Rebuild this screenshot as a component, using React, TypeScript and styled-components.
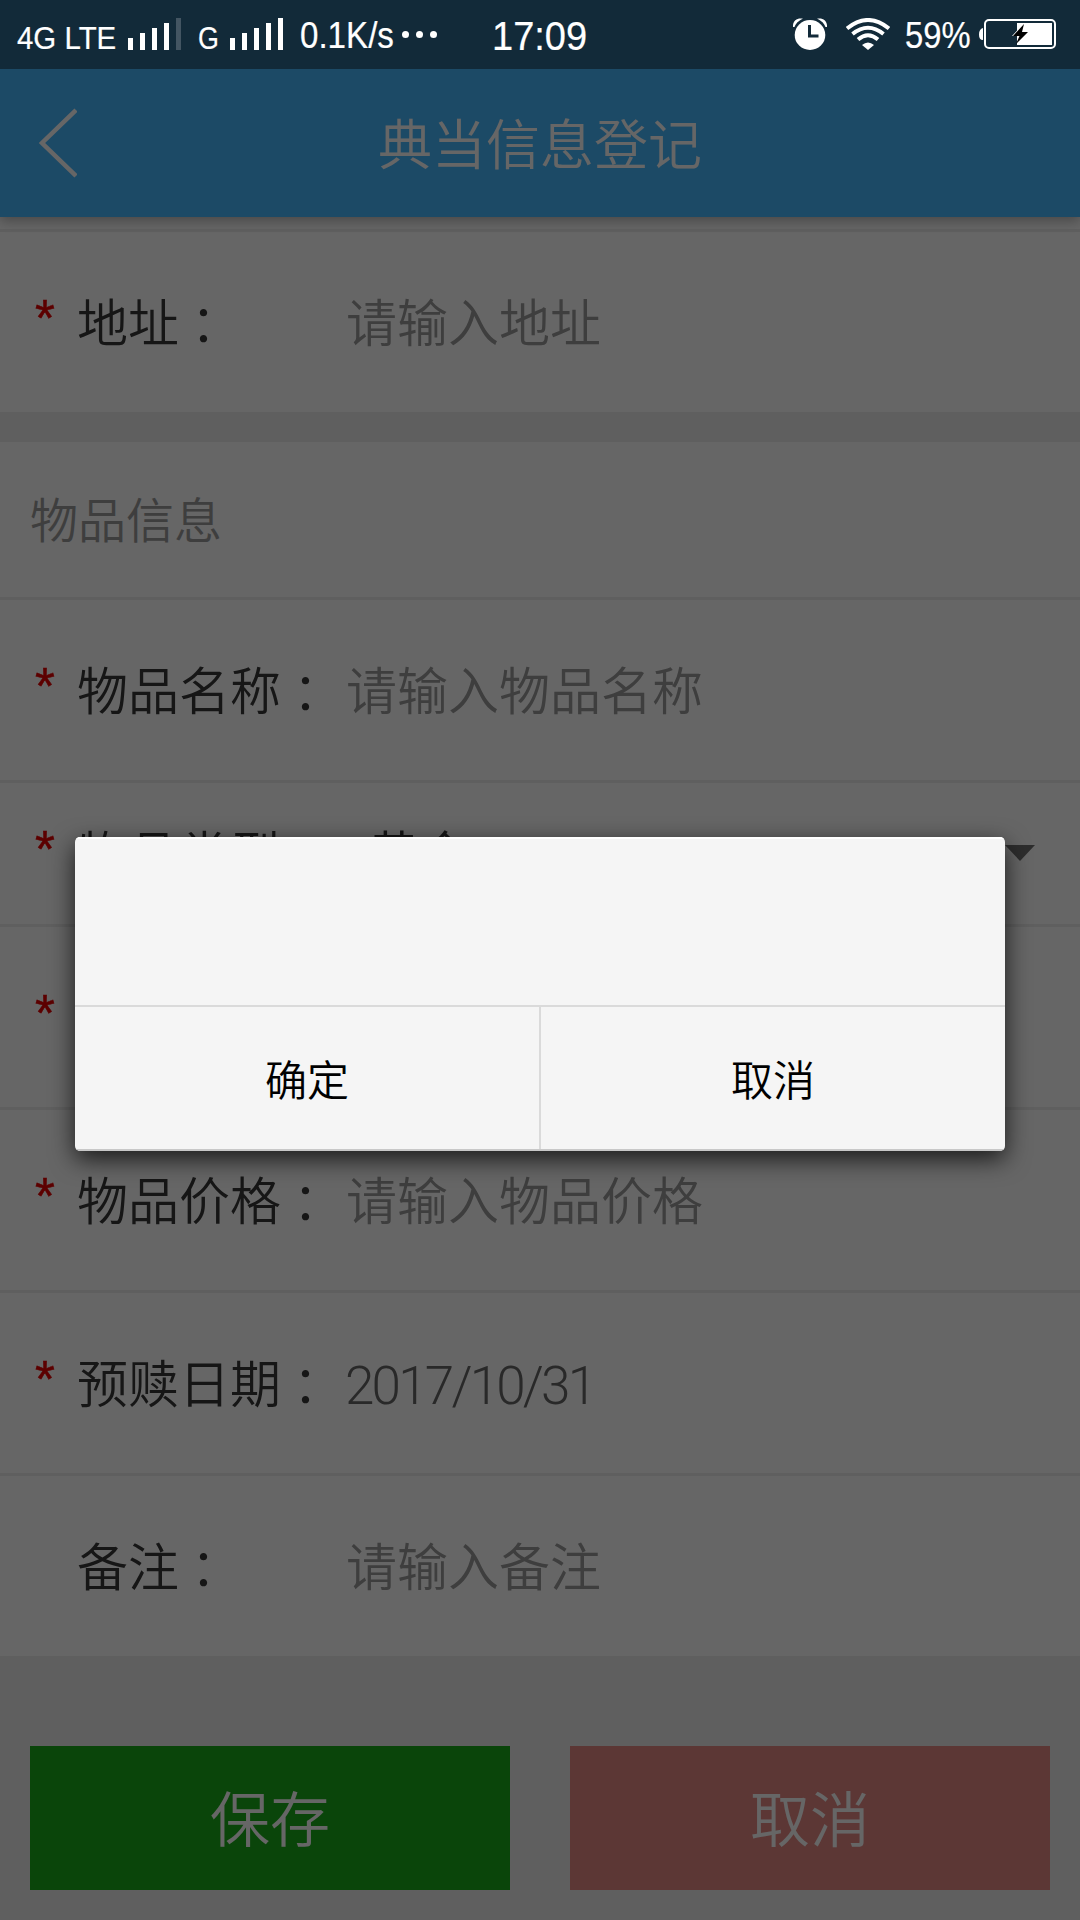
import React from "react";
import styled, { createGlobalStyle } from "styled-components";

const cjk = `"Noto Sans CJK SC", sans-serif`;

const GlobalStyle = createGlobalStyle`
  * { box-sizing: border-box; }
  body {
    margin: 0;
    background: #eeeeee;
    font-family: ${cjk};
    font-weight: 350;
  }
  button { border: 0; padding: 0; margin: 0; font: inherit; background: none; }
`;

const Screen = styled.div`
  position: relative;
  display: flex;
  flex-direction: column;
  width: 1080px;
  height: 1920px;
  overflow: hidden;
  background: #eeeeee;
`;

const StatusBar = styled.header`
  position: relative;
  z-index: 3;
  flex: none;
  display: flex;
  justify-content: space-between;
  height: 69px;
  padding: 18px 24px 19px 17px;
  background: #122a39;
  color: #ffffff;
  font-family: "Liberation Sans", Arial, sans-serif;
  font-weight: 400;
`;

const StatusGroup = styled.div`
  display: flex;
  align-items: flex-end;
`;

const StatusText = styled.span<{ $size: number; $width: number; $squeeze?: number; $lift?: number }>`
  display: block;
  width: ${(p) => p.$width}px;
  font-size: ${(p) => p.$size}px;
  line-height: 32px;
  white-space: nowrap;
  transform: scaleX(${(p) => p.$squeeze ?? 1});
  transform-origin: left center;
  margin-bottom: ${(p) => p.$lift ?? 0}px;
  -webkit-text-stroke: 0.2px #ffffff;
`;

const Bars = styled.div<{ $gapAfter: number }>`
  display: flex;
  align-items: flex-end;
  gap: 7px;
  margin-right: ${(p) => p.$gapAfter}px;
`;

const Bar = styled.i<{ $level: number; $dim?: boolean }>`
  width: 5px;
  height: ${(p) => 7 + p.$level * 5}px;
  background: ${(p) => (p.$dim ? "#435562" : "#ffffff")};
`;

const Dots = styled.div`
  display: flex;
  gap: 7px;
  height: 32px;
  padding-top: 13px;
  margin-right: 55px;
`;

const Dot = styled.i`
  width: 7px;
  height: 7px;
  border-radius: 50%;
  background: #ffffff;
`;

const TitleBar = styled.div`
  position: relative;
  z-index: 1;
  flex: none;
  display: grid;
  grid-template-columns: 120px 1fr 120px;
  align-items: center;
  height: 148px;
  background: #48b9ff;
  color: #ffffff;
  box-shadow: 0 4px 12px rgba(0, 0, 0, 0.3);
`;

const BackButton = styled.button`
  display: flex;
  padding-left: 38px;
`;

const Title = styled.h1`
  margin: 0;
  padding-bottom: 3px;
  text-align: center;
  font-size: 54px;
  font-weight: 350;
  line-height: 60px;
`;

const PreviousRow = styled.div`
  flex: none;
  height: 15px;
  border-bottom: 3px solid #eeeeee;
  background: #ffffff;
`;

const Group = styled.section<{ $top: number }>`
  flex: none;
  margin-top: ${(p) => p.$top}px;
  background: #ffffff;
`;

const Row = styled.div<{ $height: number; $last?: boolean }>`
  display: flex;
  align-items: center;
  height: ${(p) => p.$height}px;
  padding: 0 30px 4px 34px;
  border-bottom: ${(p) => (p.$last ? "0" : "3px solid #eeeeee")};
  font-size: 51px;
  line-height: 60px;
`;

const Star = styled.span`
  width: 43px;
  padding: 0 0 3px 1px;
  color: #e60000;
  font-family: "Liberation Sans", Arial, sans-serif;
  font-weight: 400;
  -webkit-text-stroke: 0.5px #e60000;
`;

const Label = styled.label`
  display: flex;
  width: 269px;
  color: #383838;
  white-space: nowrap;
`;

const Colon = styled.span`
  padding-top: 3px;
  margin: 0 0 -3px -1px;
  font-family: "Noto Sans CJK TC", sans-serif;
`;

const Placeholder = styled.span`
  color: #9b9b9b;
`;

const DateValue = styled.span`
  padding-top: 9px;
  margin-left: -1px;
  color: #686868;
  font-family: Roboto, sans-serif;
  font-size: 53px;
  font-weight: 300;
  letter-spacing: -2.800px;
`;

const SelectValue = styled.span`
  flex: 1;
  padding-left: 22px;
  color: #383838;
`;

const Caret = styled.i`
  width: 0;
  margin-right: 15px;
  margin-top: 3px;
  border: 15px solid transparent;
  border-top: 16px solid #707070;
  border-bottom: 0;
`;

const SectionTitle = styled.h2`
  display: flex;
  align-items: center;
  height: 158px;
  margin: 0;
  padding: 0 0 5px 30px;
  border-bottom: 3px solid #eeeeee;
  color: #9b9b9b;
  font-size: 48px;
  font-weight: 350;
`;

const Actions = styled.div`
  display: grid;
  grid-template-columns: 1fr 1fr;
  gap: 60px;
  padding: 90px 30px 30px;
`;

const ActionButton = styled.button<{ $color: string }>`
  height: 144px;
  padding-bottom: 5px;
  background: ${(p) => p.$color};
  color: #ffffff;
  font-size: 60px;
`;

const Overlay = styled.div`
  position: absolute;
  inset: 69px 0 0;
  z-index: 2;
  display: flex;
  align-items: center;
  justify-content: center;
  padding-bottom: 1px;
  background: rgba(0, 0, 0, 0.6);
`;

const Dialog = styled.div`
  display: grid;
  grid-template-rows: 168px 1fr;
  width: 930px;
  height: 314px;
  border-radius: 5px;
  overflow: hidden;
  background: #f5f5f5;
  box-shadow: 0 8px 24px rgba(0, 0, 0, 0.75);
`;

const DialogMessage = styled.div`
  border-top: 2px solid #ffffff;
`;

const DialogActions = styled.div`
  display: grid;
  grid-template-columns: 464px 2px 464px;
  border-top: 2px solid #dadada;
  border-bottom: 2px solid #c8c8c8;
`;

const DialogDivider = styled.i`
  background: #dadada;
`;

const DialogButton = styled.button`
  padding-bottom: 2px;
  color: #000000;
  font-size: 42px;
`;

const StatusIcons = styled.div`
  display: flex;
  align-items: flex-start;
`;

const IconSlot = styled.div<{ $after: number; $top?: number }>`
  display: flex;
  padding-top: ${(p) => p.$top ?? 0}px;
  margin-right: ${(p) => p.$after}px;
`;

function Signal({ lit, gapAfter }: { lit: number; gapAfter: number }) {
  return (
    <Bars $gapAfter={gapAfter}>
      {[1, 2, 3, 4, 5].map((n) => (
        <Bar key={n} $level={n} $dim={n > lit} />
      ))}
    </Bars>
  );
}

function AlarmIcon() {
  return (
    <svg width="34" height="32" viewBox="0 0 34 32" fill="#fff">
      <path d="M0 9C-.5 3 4-.5 10 .8 5 3 3 5.500 1.500 9zM34 9C34.500 3 30-.5 24 .8 29 3 31 5.500 32.500 9z" />
      <ellipse cx="17" cy="17" rx="15.300" ry="15" />
      <path d="M16.500 7v11h9" fill="none" stroke="#122a39" strokeWidth="3" />
    </svg>
  );
}

function WifiIcon() {
  return (
    <svg width="44" height="32" viewBox="0 0 44 32" fill="none" stroke="#fff" strokeWidth="4">
      <path d="M1 10.500Q22-6.500 43 10.500M6.500 16Q22 3.500 37.500 16M12 21.500Q22 13 32 21.500" />
      <path d="M16 27Q22 22 28 27L22 32z" fill="#fff" stroke="none" />
    </svg>
  );
}

function BatteryIcon() {
  return (
    <svg width="77" height="30" viewBox="0 0 77 30">
      <path d="M4 9Q0 10 0 15.500T4 21z" fill="#fff" />
      <rect x="6" y="1" width="70" height="28" rx="4" fill="none" stroke="#fff" strokeWidth="2" />
      <rect x="38" y="4" width="35" height="22" fill="#fff" />
      <path d="M43 6L33 17h5v-4z" fill="#fff" />
      <path d="M45 5L34 17h6.500L37 25 49 13h-6z" fill="#000" />
    </svg>
  );
}

interface FieldProps {
  label?: string;
  required?: boolean;
  height?: number;
  last?: boolean;
  children?: React.ReactNode;
}

function Field({ label, required, height = 183, last, children }: FieldProps) {
  return (
    <Row $height={height} $last={last}>
      <Star>{required ? "*" : ""}</Star>
      <Label>
        {label}
        {label && <Colon>：</Colon>}
      </Label>
      {children}
    </Row>
  );
}

export default function App() {
  return (
    <>
      <GlobalStyle />
      <Screen>
        <StatusBar>
          <StatusGroup>
            <StatusText $size={32} $width={111} $squeeze={0.92} $lift={-4}>4G LTE</StatusText>
            <Signal lit={4} gapAfter={17} />
            <StatusText $size={32} $width={32} $squeeze={0.84} $lift={-4}>G</StatusText>
            <Signal lit={5} gapAfter={17} />
            <StatusText $size={36} $width={102} $squeeze={0.92} $lift={-2}>0.1K/s</StatusText>
            <Dots>
              <Dot />
              <Dot />
              <Dot />
            </Dots>
            <StatusText $size={40} $width={96} $squeeze={0.95} $lift={-2}>17:09</StatusText>
          </StatusGroup>
          <StatusIcons>
            <IconSlot $after={19}><AlarmIcon /></IconSlot>
            <IconSlot $after={15}><WifiIcon /></IconSlot>
            <IconSlot $after={0} $top={2}>
              <StatusText $size={36} $width={74} $squeeze={0.91}>59%</StatusText>
            </IconSlot>
            <IconSlot $after={0} $top={1}><BatteryIcon /></IconSlot>
          </StatusIcons>
        </StatusBar>

        <TitleBar>
          <BackButton aria-label="返回">
            <svg width="39" height="70" viewBox="0 0 39 70" fill="none" stroke="#fff" strokeWidth="4.500">
              <path d="M38 2L4 35l34 33" />
            </svg>
          </BackButton>
          <Title>典当信息登记</Title>
        </TitleBar>
        <PreviousRow />

        <Group $top={0}>
          <Field label="地址" required height={180} last>
            <Placeholder>请输入地址</Placeholder>
          </Field>
        </Group>

        <Group $top={30}>
          <SectionTitle>物品信息</SectionTitle>
          <Field label="物品名称" required>
            <Placeholder>请输入物品名称</Placeholder>
          </Field>
          <Field label="物品类型" required height={144}>
            <SelectValue>黄金</SelectValue>
            <Caret />
          </Field>
          <Field required />
          <Field label="物品价格" required>
            <Placeholder>请输入物品价格</Placeholder>
          </Field>
          <Field label="预赎日期" required>
            <DateValue>2017/10/31</DateValue>
          </Field>
          <Field label="备注" height={180} last>
            <Placeholder>请输入备注</Placeholder>
          </Field>
        </Group>

        <Actions>
          <ActionButton $color="#1aad19">保存</ActionButton>
          <ActionButton $color="#e68a86">取消</ActionButton>
        </Actions>

        <Overlay>
          <Dialog role="dialog">
            <DialogMessage />
            <DialogActions>
              <DialogButton>确定</DialogButton>
              <DialogDivider />
              <DialogButton>取消</DialogButton>
            </DialogActions>
          </Dialog>
        </Overlay>
      </Screen>
    </>
  );
}
